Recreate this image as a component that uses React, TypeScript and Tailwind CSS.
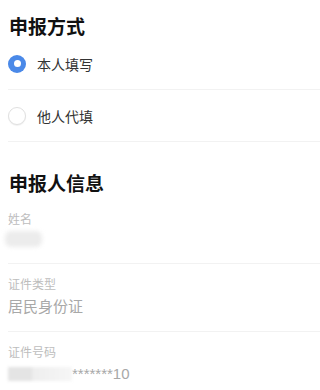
import React from 'react';

const cjk = { fontFamily: '"Noto Sans CJK SC", "Noto Sans", sans-serif' };

function Radio({ checked, label }: { checked?: boolean; label: string }) {
  return (
    <div className="flex h-[52px] items-center border-b border-[#f2f2f2]">
      {checked ? (
        <div className="flex h-[18px] w-[18px] items-center justify-center rounded-full bg-[#4a89e8]">
          <div className="h-[7px] w-[7px] rounded-full bg-white" />
        </div>
      ) : (
        <div className="h-[18px] w-[18px] rounded-full border border-[#e0e0e0] bg-white shadow-[0_1px_1px_rgba(0,0,0,0.06)]" />
      )}
      <span className="ml-[11px] text-[14px] leading-5 text-[#333]">{label}</span>
    </div>
  );
}

export default function App() {
  return (
    <div className="min-h-[390px] w-full overflow-hidden bg-white" style={cjk}>
      <div className="pl-2">
        {/* 申报方式 */}
        <h2 className="pl-px pt-[14px] text-[19px] font-bold leading-6 text-[#111]">申报方式</h2>
        <Radio checked label="本人填写" />
        <Radio label="他人代填" />

        {/* 申报人信息 */}
        <h2 className="mt-[29px] pl-px text-[19px] font-bold leading-6 text-[#111]">申报人信息</h2>

        <div className="border-b border-[#f2f2f2] pb-4 pt-4">
          <div className="text-[12px] leading-4 text-[#bdbdbd]">姓名</div>
          <div className="mt-1 h-4 w-[37px] -translate-x-[3px] rounded-md bg-[#ececec] blur-[2px]" />
        </div>

        <div className="border-b border-[#f2f2f2] pb-[15px] pt-3">
          <div className="text-[12px] leading-4 text-[#bdbdbd]">证件类型</div>
          <div className="mt-1 text-[15px] leading-5 text-[#a8a8a8]">居民身份证</div>
        </div>

        <div className="pt-3">
          <div className="text-[12px] leading-4 text-[#bdbdbd]">证件号码</div>
          <div className="mt-1 flex h-5 items-center">
            <div className="flex h-[14px] w-[64px] blur-[1.5px]">
              <div className="w-[24px] bg-[#e4e4e4]" />
              <div className="flex-1 bg-gradient-to-r from-[#eeeeee] to-[#f6f6f6]" />
            </div>
            <span
              className="text-[15px] leading-5 text-[#a8a8a8]"
              style={{ fontFamily: '"Liberation Sans", Arial, sans-serif' }}
            >
              *******10
            </span>
          </div>
        </div>
      </div>
    </div>
  );
}
